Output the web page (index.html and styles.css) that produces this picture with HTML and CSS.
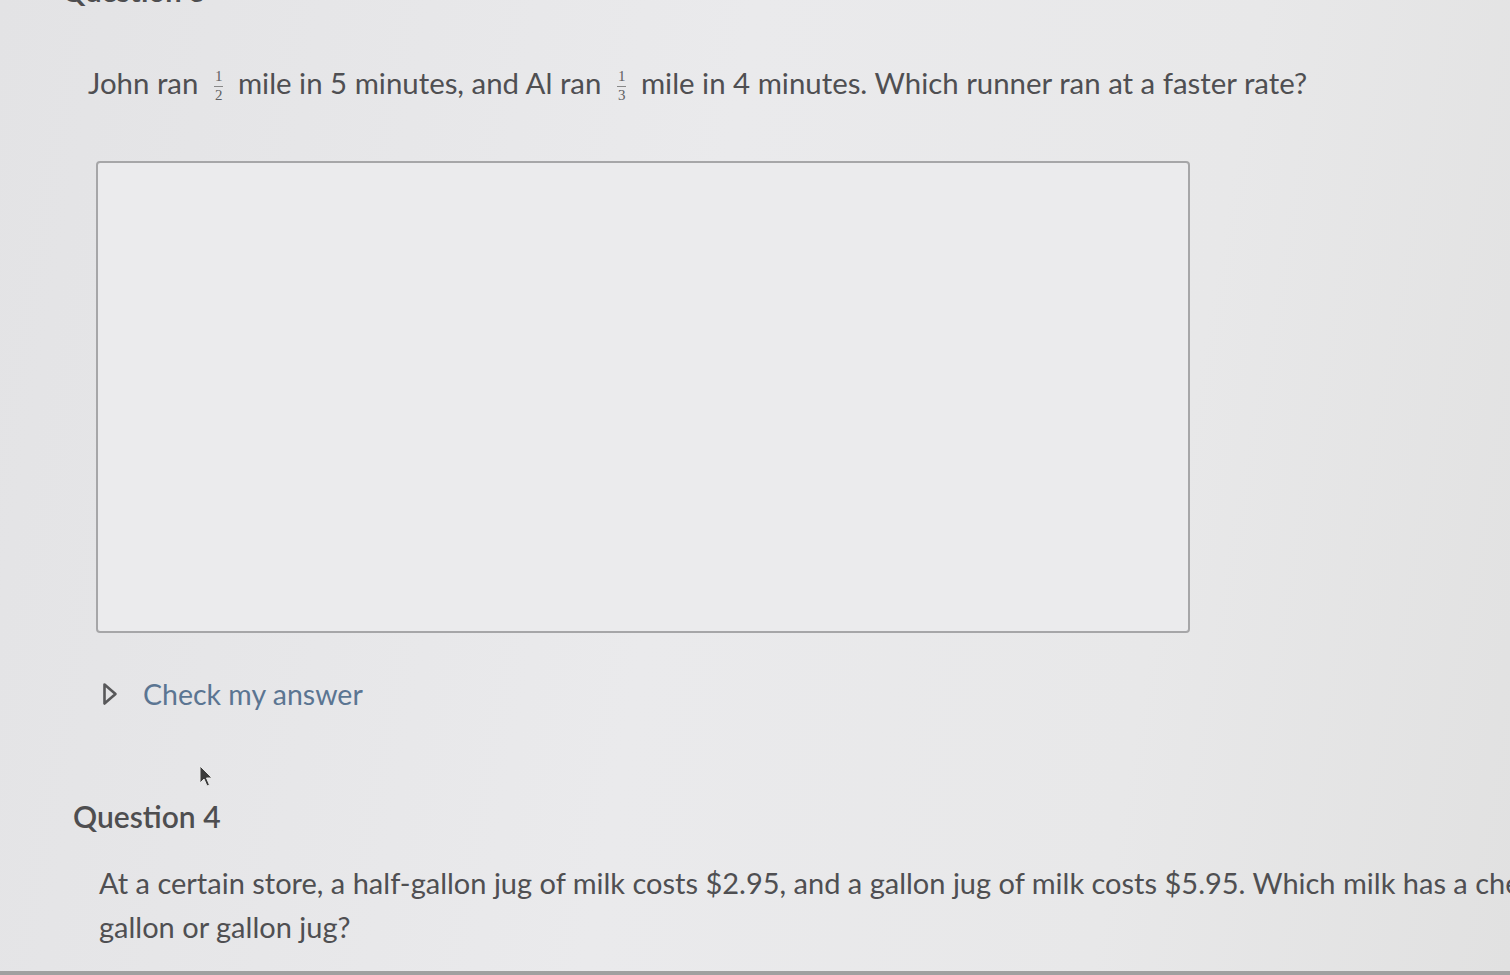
FILE: index.html
```html
<!DOCTYPE html>
<html lang="en">
<head>
<meta charset="utf-8">
<title>Quiz</title>
<link rel="stylesheet" href="styles.css">
</head>
<body>
<div class="page">
  <h2 class="q-title q3">Question 3</h2>
  <p class="prompt">John ran <span class="frac"><span class="num">1</span><span class="den">2</span></span> mile in 5 minutes, and Al ran <span class="frac"><span class="num">1</span><span class="den">3</span></span> mile in 4 minutes. Which runner ran at a faster rate?</p>
  <div class="answer-box"></div>
  <div class="check">
    <svg class="tri" width="16" height="24" viewBox="0 0 16 24"><path d="M2.5 2.5 L13.5 12 L2.5 21.5 Z" fill="none" stroke="#58585a" stroke-width="2.6" stroke-linejoin="round"/></svg>
    <span class="check-label">Check my answer</span>
  </div>
  <div class="cursor-area">
    <svg class="cursor" width="16" height="24" viewBox="0 0 16 24"><path d="M2 1 L2 18 L6 14 L9 21 L11.5 20 L8.5 13 L14 13 Z" fill="#3a3a3a" stroke="#e8e8e8" stroke-width="1"/></svg>
  </div>
  <h2 class="q-title q4">Question 4</h2>
  <p class="prompt2">At a certain store, a half-gallon jug of milk costs $2.95, and a gallon jug of milk costs $5.95. Which milk has a cheaper price per gallon, the half-<br>gallon or gallon jug?</p>
</div>
</body>
</html>
```
FILE: styles.css
```css
html, body {
  margin: 0;
  padding: 0;
  height: 100%;
  overflow: hidden;
}
body {
  background: linear-gradient(100deg, #e3e3e5 0%, #eaeaec 45%, #e8e8e9 75%, #e1e1e1 100%);
  font-family: Lato, "Open Sans", sans-serif;
  color: #4f4f52;
}
.page {
  display: flow-root;
  height: 975px;
  border-bottom: 4px solid #a0a0a0;
  box-sizing: border-box;
}
.q-title {
  margin: 0;
  font-weight: 700;
  font-size: 29px;
  line-height: 36px;
  color: #4e4e50;
}
.q3 {
  margin-left: 62px;
  margin-top: -27px;
}
.prompt {
  margin: 56px 0 0 88px;
  font-size: 29.4px;
  line-height: 36px;
  white-space: nowrap;
}
.frac {
  display: inline-flex;
  flex-direction: column;
  align-items: center;
  vertical-align: middle;
  font-family: "Liberation Serif", serif;
  font-size: 15px;
  line-height: 17px;
  margin: 0 7px 0 8px;
  position: relative;
  top: -1px;
  color: #606062;
}
.frac .num {
  border-bottom: 1px solid #888;
  padding: 0 1px 1px;
}
.answer-box {
  margin: 56px 0 0 96px;
  width: 1090px;
  height: 468px;
  border: 2px solid #a6a6a8;
  border-radius: 4px;
  background: #ebebed;
}
.check {
  margin: 43px 0 0 102px;
  display: flex;
  align-items: center;
  gap: 25px;
  height: 36px;
}
.check-label {
  font-size: 28.5px;
  color: #5b7592;
}
.cursor-area {
  height: 86px;
  position: relative;
}
.cursor {
  position: absolute;
  left: 198px;
  top: 53px;
}
.q4 {
  margin-left: 73px;
  font-size: 30px;
  font-weight: 600;
}
.prompt2 {
  margin: 27px 0 0 99px;
  font-size: 29px;
  line-height: 44px;
  white-space: nowrap;
}
```
